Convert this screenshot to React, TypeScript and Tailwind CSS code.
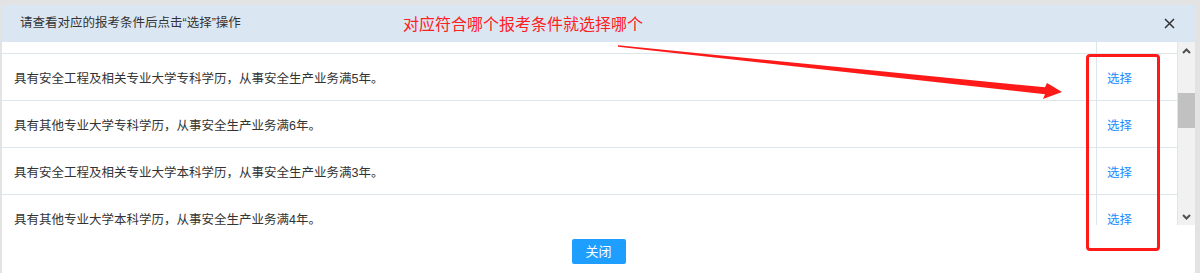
import React from 'react';

const rows = [
  '具有安全工程及相关专业大学专科学历，从事安全生产业务满5年。',
  '具有其他专业大学专科学历，从事安全生产业务满6年。',
  '具有安全工程及相关专业大学本科学历，从事安全生产业务满3年。',
  '具有其他专业大学本科学历，从事安全生产业务满4年。',
];

const font = { fontFamily: '"Liberation Sans", "Noto Sans CJK SC", sans-serif' };

const App = () => {
  return (
    <div className="relative w-[1200px] h-[273px] overflow-hidden bg-[#e3e3e3] pt-[5px] pl-[2px] pr-[5px]" style={font}>
      <div className="flex flex-col h-full bg-white">
        {/* title bar */}
        <div className="flex items-center justify-between h-[37px] bg-[#dbe6f3] pl-[18px] pr-[20px]">
          <span className="text-[12.5px] text-[#333]">请查看对应的报考条件后点击“选择”操作</span>
          <svg width="11" height="11" viewBox="0 0 11 11" className="text-[#333]">
            <path d="M1 1 L10 10 M10 1 L1 10" stroke="currentColor" strokeWidth="1.5" />
          </svg>
        </div>

        {/* table + scrollbar */}
        <div className="flex h-[183px]">
          <div className="flex-1 overflow-hidden border-r border-[#dde7eb]">
            <div className="flex h-[12px] border-b border-[#dde7eb]">
              <div className="flex-1 border-r border-[#dde7eb]" />
              <div className="w-[80px]" />
            </div>
            {rows.map((r, i) => (
              <div key={i} className="flex h-[47px] border-b border-[#dde7eb]">
                <div className="flex-1 flex items-center pl-[12px] pt-[4px] border-r border-[#dde7eb] text-[12.5px] text-[#333]">
                  {r}
                </div>
                <div className="w-[80px] flex items-center pl-[10px] pt-[4px] text-[12.5px] text-[#1a8cff]">
                  选择
                </div>
              </div>
            ))}
          </div>
          <div className="w-[17px] flex flex-col bg-[#f1f1f1]">
            <div className="h-[17px] flex items-center justify-center">
              <svg width="9" height="6" viewBox="0 0 9 6">
                <path d="M1 5 L4.5 1.5 L8 5" stroke="#505050" strokeWidth="2" fill="none" />
              </svg>
            </div>
            <div className="h-[34px]" />
            <div className="h-[35px] bg-[#c1c1c1]" />
            <div className="flex-1" />
            <div className="h-[17px] flex items-center justify-center">
              <svg width="9" height="6" viewBox="0 0 9 6">
                <path d="M1 1 L4.5 4.5 L8 1" stroke="#505050" strokeWidth="2" fill="none" />
              </svg>
            </div>
          </div>
        </div>

        {/* footer */}
        <div className="flex justify-center pt-[14px]">
          <button className="w-[54px] h-[25px] bg-[#1e9fff] text-white text-[13px] rounded-[2px]">关闭</button>
        </div>
      </div>

      {/* annotation overlay */}
      <div className="absolute left-[403px] top-[15px] text-[16px] leading-[20px] text-[#ff2020]">
        对应符合哪个报考条件就选择哪个
      </div>
      <svg className="absolute left-0 top-0 pointer-events-none" width="1200" height="273">
        <polygon
          points="618,45.3 1045,87.3 1047,83 1062,92 1043,99 1045,94.3 618,46.7"
          fill="#ff1a1a"
        />
      </svg>
      <div className="absolute left-[1086px] top-[54px] w-[74px] h-[197px] border-[3px] border-[#ff1a1a] rounded-[4px]" />
    </div>
  );
};

export default App;
